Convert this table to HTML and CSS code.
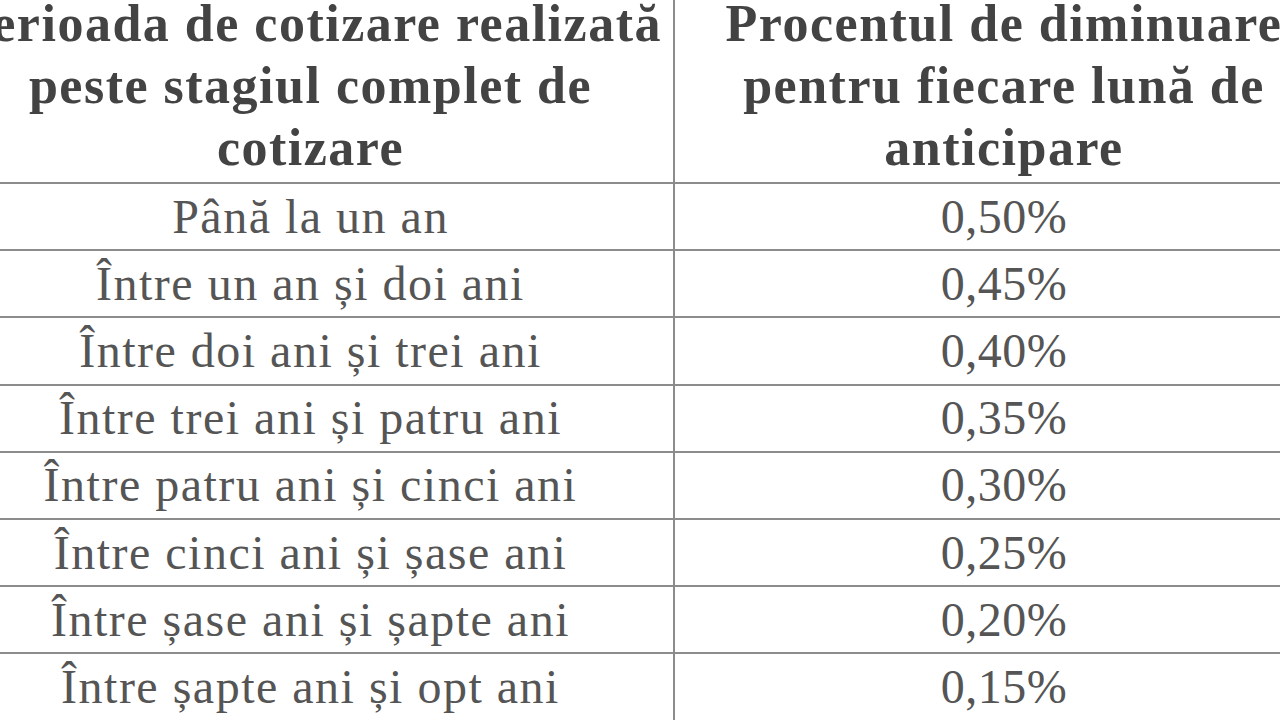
FILE: index.html
```html
<!DOCTYPE html>
<html lang="ro">
<head>
<meta charset="utf-8">
<title>Diminuare pensie anticipată</title>
<link rel="stylesheet" href="styles.css">
</head>
<body>
<div class="frame">
  <table class="rates">
    <colgroup>
      <col class="col-period">
      <col class="col-rate">
    </colgroup>
    <thead>
      <tr>
        <th>Perioada de cotizare realizată<br>peste stagiul complet de<br>cotizare</th>
        <th>Procentul de diminuare<br>pentru fiecare lună de<br>anticipare</th>
      </tr>
    </thead>
    <tbody>
      <tr><td>Până la un an</td><td class="num">0,50%</td></tr>
      <tr><td>Între un an și doi ani</td><td class="num">0,45%</td></tr>
      <tr><td>Între doi ani și trei ani</td><td class="num">0,40%</td></tr>
      <tr><td>Între trei ani și patru ani</td><td class="num">0,35%</td></tr>
      <tr><td>Între patru ani și cinci ani</td><td class="num">0,30%</td></tr>
      <tr><td>Între cinci ani și șase ani</td><td class="num">0,25%</td></tr>
      <tr><td>Între șase ani și șapte ani</td><td class="num">0,20%</td></tr>
      <tr><td>Între șapte ani și opt ani</td><td class="num">0,15%</td></tr>
      <tr><td>Între opt ani și nouă ani</td><td class="num">0,10%</td></tr>
    </tbody>
  </table>
</div>
</body>
</html>
```

FILE: styles.css
```css
html, body {
  margin: 0;
  padding: 0;
  background: #ffffff;
  overflow: hidden;
}

.frame {
  width: 1280px;
  height: 720px;
  overflow: hidden;
}

.rates {
  border-collapse: collapse;
  table-layout: fixed;
  width: 1387px;
  margin-left: -54px;
  margin-top: -10px;
  font-family: "Liberation Serif", "DejaVu Serif", serif;
  color: #555555;
}

.col-period { width: 727px; }
.col-rate { width: 660px; }

.rates th,
.rates td {
  border: 2px solid #8c8c8c;
  text-align: center;
  padding: 0;
}

.rates th {
  font-weight: bold;
  font-size: 52px;
  line-height: 62px;
  color: #434343;
  letter-spacing: 1.5px;
  padding: 1px 0 3px;
}

.rates td {
  font-size: 48px;
  height: 65.2px;
  line-height: 40px;
  letter-spacing: 1.5px;
  vertical-align: middle;
}

.rates td.num {
  letter-spacing: 0.5px;
}
```
